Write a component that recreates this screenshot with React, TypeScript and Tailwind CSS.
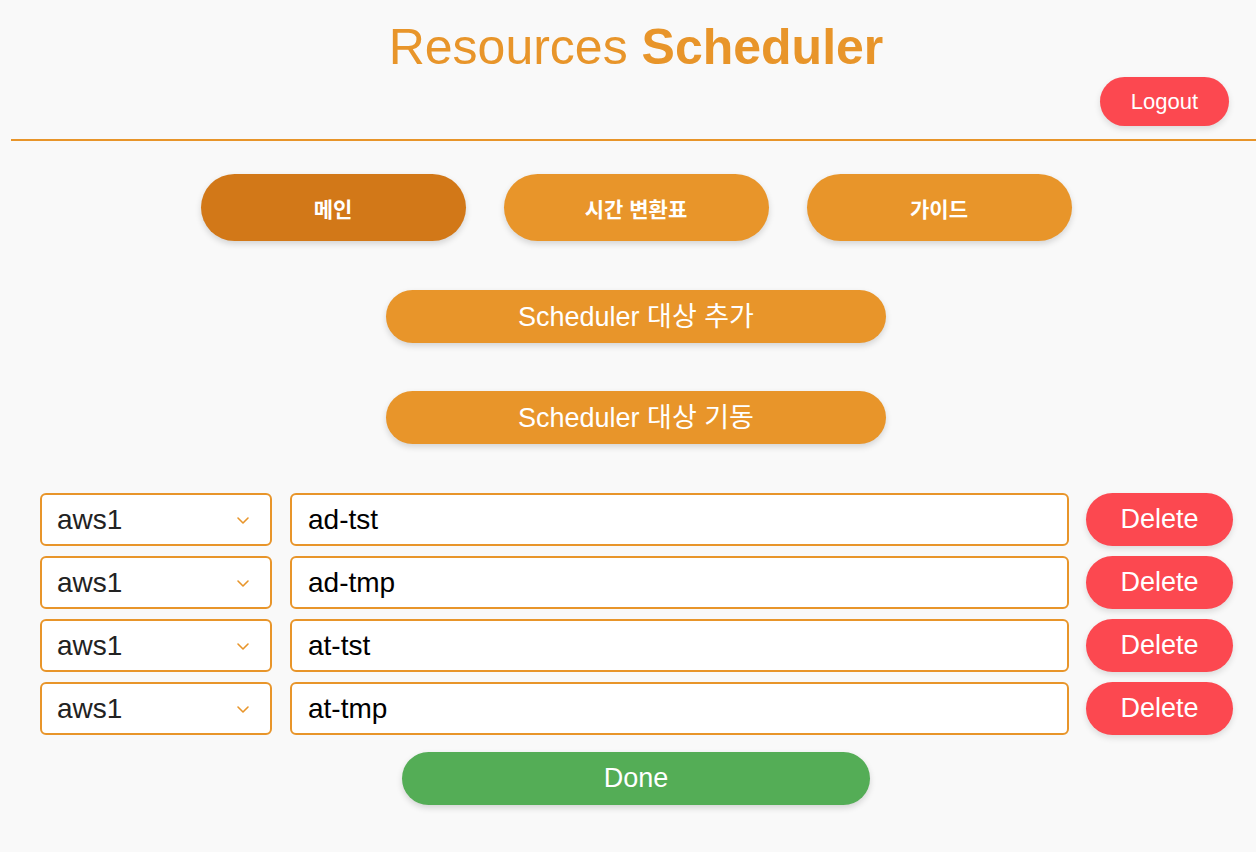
import React from "react";

const font = { fontFamily: '"Liberation Sans", Arial, "Noto Sans CJK KR", sans-serif' };

function Chevron() {
  return (
    <svg width="14" height="10" viewBox="0 0 14 10" fill="none">
      <path d="M2 3 L7 8 L12 3" stroke="#e8952a" strokeWidth="1.6" strokeLinecap="round" strokeLinejoin="round" />
    </svg>
  );
}

const rows = ["ad-tst", "ad-tmp", "at-tst", "at-tmp"];

export default function App() {
  return (
    <div className="min-h-[852px] bg-[#f9f9f9] pl-[11px] pt-[21px]" style={font}>
      <div className="flex flex-col items-center pl-[5px]">
        <h1 className="text-[50px] leading-[52px] text-[#e8952a]">
          Resources <span className="font-bold">Scheduler</span>
        </h1>
      </div>
      <div className="flex justify-end pr-[27px] mt-[4px]">
        <button className="h-[49px] w-[129px] rounded-full bg-[#fc4850] text-white text-[22px] shadow-[0_3px_6px_rgba(0,0,0,0.12)]">
          Logout
        </button>
      </div>
      <div className="mt-[13px] h-[2px] bg-[#e8952a]" />
      <div className="flex flex-col items-center pl-[5px]">
        <div className="mt-[33px] flex gap-[38px]">
          <button className="h-[67px] w-[265px] rounded-full bg-[#d27818] pt-[4px] text-white text-[21px] font-bold shadow-[0_3px_6px_rgba(0,0,0,0.15)]">
            메인
          </button>
          <button className="h-[67px] w-[265px] rounded-full bg-[#e8952a] pt-[4px] text-white text-[21px] font-bold shadow-[0_3px_6px_rgba(0,0,0,0.15)]">
            시간 변환표
          </button>
          <button className="h-[67px] w-[265px] rounded-full bg-[#e8952a] pt-[4px] text-white text-[21px] font-bold shadow-[0_3px_6px_rgba(0,0,0,0.15)]">
            가이드
          </button>
        </div>
        <button className="mt-[49px] h-[53px] w-[500px] rounded-full bg-[#e8952a] pt-[2px] text-white text-[27px] shadow-[0_3px_6px_rgba(0,0,0,0.15)]">
          Scheduler 대상 추가
        </button>
        <button className="mt-[48px] h-[53px] w-[500px] rounded-full bg-[#e8952a] pt-[2px] text-white text-[27px] shadow-[0_3px_6px_rgba(0,0,0,0.15)]">
          Scheduler 대상 기동
        </button>
      </div>
      <div className="mt-[49px] flex flex-col gap-[10px] pl-[29px] pr-[23px]">
        {rows.map((r) => (
          <div key={r} className="flex items-center">
            <div className="flex h-[53px] w-[232px] items-center justify-between rounded-[6px] border-2 border-[#e8952a] bg-white pl-[15px] pr-[20px] text-[28px] text-[#222]">
              <span>aws1</span>
              <Chevron />
            </div>
            <div className="ml-[18px] flex h-[53px] flex-1 items-center rounded-[6px] border-2 border-[#e8952a] bg-white pl-[16px] text-[28px] text-black">
              {r}
            </div>
            <button className="ml-[17px] h-[53px] w-[147px] rounded-full bg-[#fc4850] text-white text-[27px] shadow-[0_3px_6px_rgba(0,0,0,0.12)]">
              Delete
            </button>
          </div>
        ))}
      </div>
      <div className="flex justify-center pl-[5px] mt-[17px]">
        <button className="h-[53px] w-[468px] rounded-full bg-[#54ad56] text-white text-[27px] shadow-[0_3px_6px_rgba(0,0,0,0.15)]">
          Done
        </button>
      </div>
    </div>
  );
}
